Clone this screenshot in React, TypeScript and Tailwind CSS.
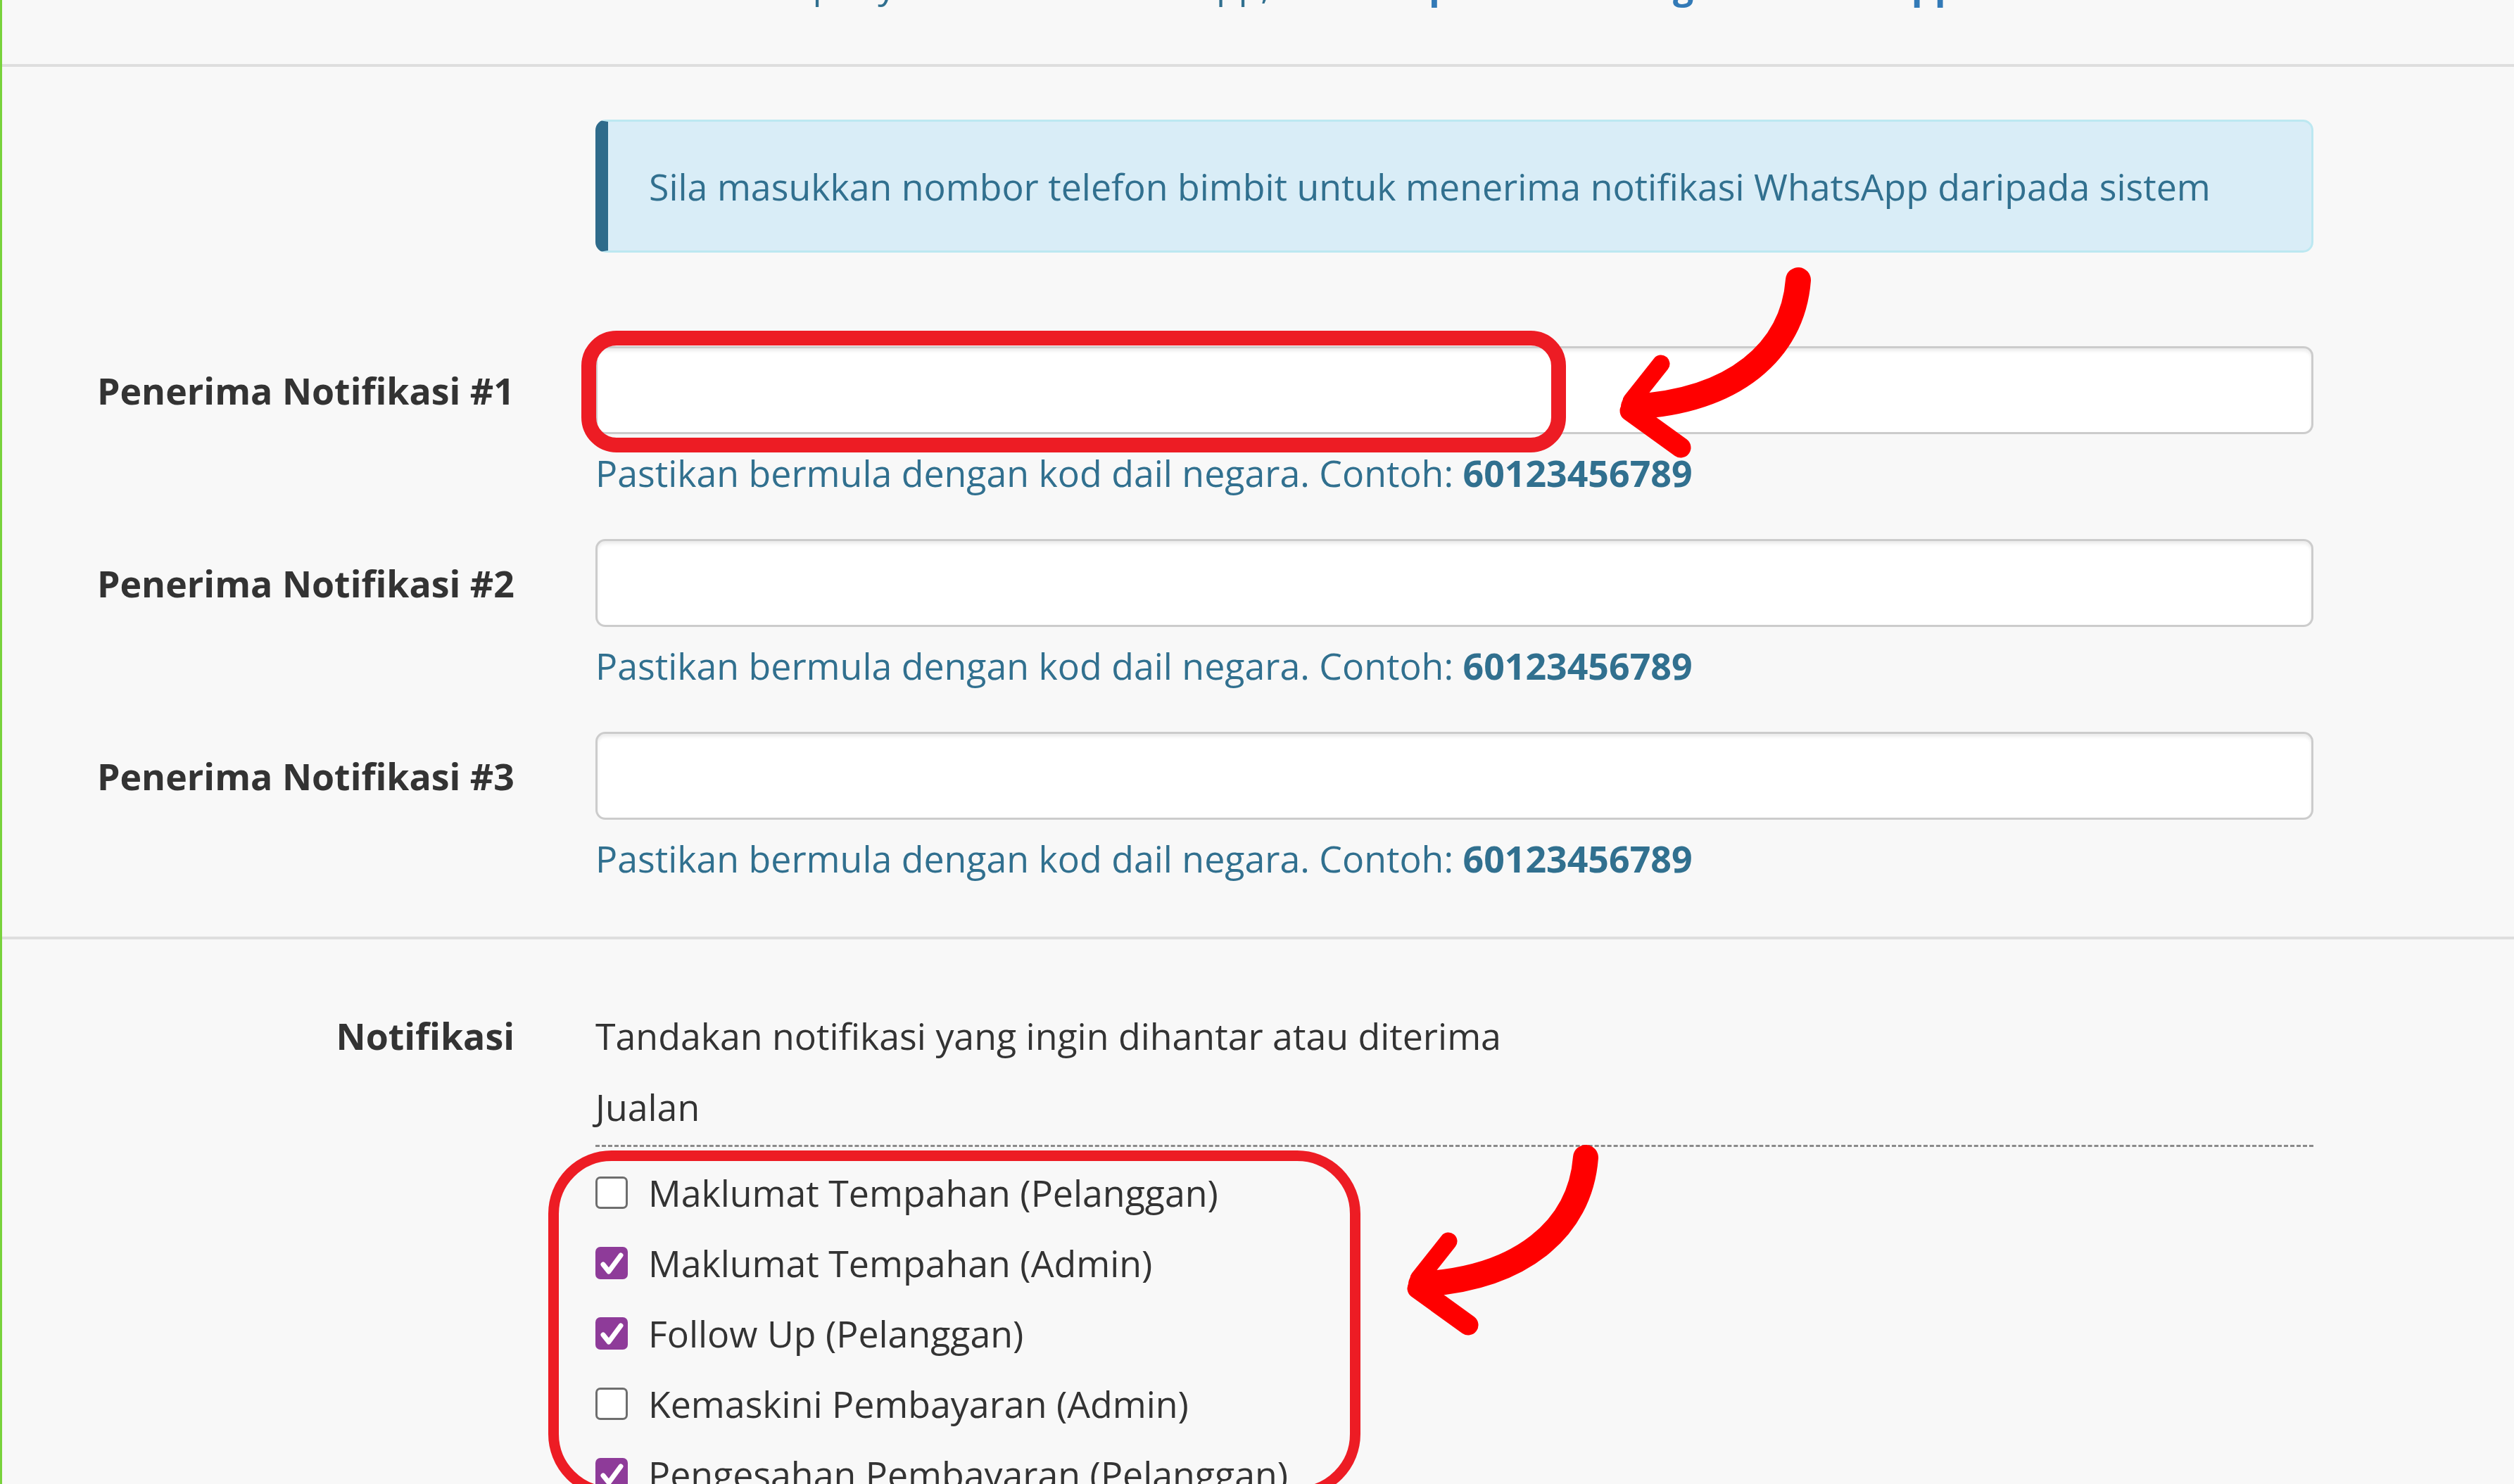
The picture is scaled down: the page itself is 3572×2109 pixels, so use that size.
import React from "react";

const checks = [
  { label: "Maklumat Tempahan (Pelanggan)", checked: false },
  { label: "Maklumat Tempahan (Admin)", checked: true },
  { label: "Follow Up (Pelanggan)", checked: true },
  { label: "Kemaskini Pembayaran (Admin)", checked: false },
  { label: "Pengesahan Pembayaran (Pelanggan)", checked: true },
  { label: "Pengesahan Pembayaran (Admin)", checked: false },
];

// hand drawn red arrow, same shape used twice
const Arrow = ({ className }: { className: string }) => (
  <svg
    className={className}
    width="310"
    height="290"
    viewBox="0 0 310 290"
    fill="none"
    stroke="#ff0000"
    strokeLinecap="round"
    strokeLinejoin="round"
  >
    <path d="M270 18 C262 120, 178 190, 36 198" strokeWidth="36" />
    <path d="M75 137 L33 190" strokeWidth="25" />
    <path d="M31 204 L103 256" strokeWidth="29" />
  </svg>
);

const Checkbox = ({ checked }: { checked: boolean }) =>
  checked ? (
    <span className="flex w-[46px] h-[46px] shrink-0 items-center justify-center rounded-[7px] bg-[#8e3b99]">
      <svg width="46" height="46" viewBox="0 0 46 46" fill="none">
        <polyline
          points="11,25 19,35 36,12"
          stroke="#ffffff"
          strokeWidth="7"
          strokeLinecap="round"
          strokeLinejoin="round"
        />
      </svg>
    </span>
  ) : (
    <span className="block w-[46px] h-[46px] shrink-0 rounded-[7px] border-[3px] border-[#6e6e6e] bg-white"></span>
  );

const PhoneRow = ({ no, last }: { no: number; last?: boolean }) => (
  <div
    className={`grid grid-cols-[728px_2441px] gap-x-[115px] ${
      last ? "" : "mb-[57px]"
    }`}
  >
    <label className="pt-[26px] text-right font-bold text-[#333333]">
      Penerima Notifikasi #{no}
    </label>
    <div>
      <input
        type="text"
        className="block w-full h-[125px] rounded-[14px] border-[3px] border-[#cccccc] bg-white px-[45px] text-[52px] shadow-[inset_0_4px_4px_rgba(0,0,0,0.075)] outline-none"
      />
      <p className="mt-[18px] text-[#31708f]">
        Pastikan bermula dengan kod dail negara. Contoh:{" "}
        <b className="font-bold">60123456789</b>
      </p>
    </div>
  </div>
);

export default function App() {
  return (
    <div className="relative h-[2109px] overflow-hidden border-l-[3px] border-[#78d23c] bg-[#f8f8f8] font-['Open_Sans',sans-serif] text-[51.85px] leading-[74px]">
      {/* top section, mostly scrolled out */}
      <div className="border-b-[4px] border-[#dedede] pb-[74px]">
        <p className="-mt-[57px] relative -top-[2px] pl-[843px] whitespace-nowrap text-[#31708f]">
          Untuk akses penyelesaian di WhatsApp, sila lihat{" "}
          <a className="font-bold text-[#337ab7]">
            panduan integrasi WhatsApp Business
          </a>
        </p>
      </div>

      {/* phone numbers */}
      <div className="border-b-[4px] border-[#dedede] pt-[75px] pb-[74px]">
        <div className="grid grid-cols-[728px_2441px] gap-x-[115px] mb-[133px]">
          <div></div>
          <div className="rounded-[15px] border-[3px] border-l-[18px] border-[#bce8f1] border-l-[#2e6b8b] bg-[#d9edf7] pt-[55px] pb-[54px] pl-[58px] text-[#31708f]">
            Sila masukkan nombor telefon bimbit untuk menerima notifikasi
            WhatsApp daripada sistem
          </div>
        </div>
        <PhoneRow no={1} />
        <PhoneRow no={2} />
        <PhoneRow no={3} last />
      </div>

      {/* notification options */}
      <div className="pt-[100px]">
        <div className="grid grid-cols-[728px_2441px] gap-x-[115px]">
          <label className="text-right font-bold text-[#333333]">
            Notifikasi
          </label>
          <div className="text-[#333333]">
            <p>Tandakan notifikasi yang ingin dihantar atau diterima</p>
            <div className="mt-[27px] pb-[17px] border-b-[3px] border-dashed border-[#8a8a8a]">
              Jualan
            </div>
            <ul className="mt-[15px]">
              {checks.map((item, i) => (
                <li key={i} className="flex h-[100px] items-center gap-[29px]">
                  <Checkbox checked={item.checked} />
                  <span>{item.label}</span>
                </li>
              ))}
            </ul>
          </div>
        </div>
      </div>

      {/* annotations */}
      <div className="pointer-events-none absolute left-[823px] top-[470px] w-[1399px] h-[173px] rounded-[50px] border-[21px] border-[#ed1c24]"></div>
      <div className="pointer-events-none absolute left-[776px] top-[1635px] w-[1154px] h-[493px] rounded-[90px] border-[15px] border-[#ed1c24]"></div>
      <Arrow className="pointer-events-none absolute left-[2282px] top-[380px]" />
      <Arrow className="pointer-events-none absolute left-[1980px] top-[1627px]" />
    </div>
  );
}
